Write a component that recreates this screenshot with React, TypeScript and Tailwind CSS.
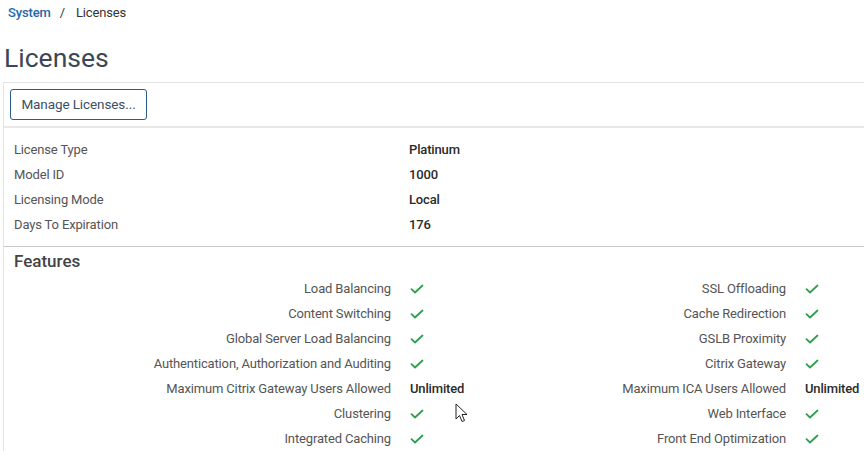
import React from "react";

const info = [
  ["License Type", "Platinum"],
  ["Model ID", "1000"],
  ["Licensing Mode", "Local"],
  ["Days To Expiration", "176"],
];

const features: [string, string | null, string, string | null][] = [
  ["Load Balancing", null, "SSL Offloading", null],
  ["Content Switching", null, "Cache Redirection", null],
  ["Global Server Load Balancing", null, "GSLB Proximity", null],
  ["Authentication, Authorization and Auditing", null, "Citrix Gateway", null],
  ["Maximum Citrix Gateway Users Allowed", "Unlimited", "Maximum ICA Users Allowed", "Unlimited"],
  ["Clustering", null, "Web Interface", null],
  ["Integrated Caching", null, "Front End Optimization", null],
];

const Check = () => (
  <svg width="14" height="10" viewBox="0 0 14 10" className="mt-[1px]">
    <path d="M1.5 5.2 L5 8.5 L12.5 1.5" fill="none" stroke="#2f9e4f" strokeWidth="1.8" strokeLinecap="round" strokeLinejoin="round" />
  </svg>
);

const Value = ({ v }: { v: string | null }) =>
  v ? <span className="font-medium text-[#2a2a2a]">{v}</span> : <Check />;

export default function App() {
  return (
    <div className="relative h-[456px] w-[864px] overflow-hidden bg-white text-[13px] tracking-[-0.15px] text-[#555]" style={{ fontFamily: "Roboto, 'Liberation Sans', sans-serif" }}>
      <div className="flex items-center gap-[9px] pl-2 pt-[5px] leading-4">
        <span className="font-medium text-[#2466a8]">System</span>
        <span className="text-[#333]">/</span>
        <span className="pl-[2px] text-[#333]">Licenses</span>
      </div>

      <h1 className="mt-[20px] pl-1 text-[26.5px] leading-[34px] tracking-normal text-[#3b4656]">Licenses</h1>

      <div className="ml-[3px] mt-[7px] border-l border-t border-[#e3e3e3]">
        <div className="h-[45px] border-b-2 border-[#e8e8e8] pl-[6px] pt-[6px]">
          <button className="h-[31px] w-[137px] rounded-[3px] border border-[#2d5c88] text-[13.5px] tracking-[-0.1px] text-[#3b4f66]">
            Manage Licenses...
          </button>
        </div>

        <div className="border-b border-[#c9c9c9] pb-[9px] pt-[9px]">
          {info.map(([k, v]) => (
            <div key={k} className="flex h-[25px] items-center pl-[10px]">
              <span className="w-[395px]">{k}</span>
              <span className="font-medium text-[#2a2a2a]">{v}</span>
            </div>
          ))}
        </div>

        <div className="pl-[10px] pt-[4px] text-[17px] font-medium leading-[20px] tracking-normal text-[#444]">Features</div>

        <div className="pt-[5px]">
          {features.map(([l1, v1, l2, v2]) => (
            <div key={l1} className="flex h-[25px] items-center">
              <span className="w-[387px] text-right">{l1}</span>
              <span className="ml-[19px] flex w-[76px] items-center">
                <Value v={v1} />
              </span>
              <span className="w-[300px] text-right">{l2}</span>
              <span className="ml-[19px] flex items-center">
                <Value v={v2} />
              </span>
            </div>
          ))}
        </div>
      </div>

      <svg className="absolute left-[455px] top-[403px]" width="14" height="20" viewBox="0 0 14 20">
        <path d="M1 1 L1 16 L4.5 12.5 L7 18.5 L9.5 17.5 L7 11.5 L12 11.5 Z" fill="white" stroke="#222" strokeWidth="1" strokeLinejoin="round" />
      </svg>
    </div>
  );
}
